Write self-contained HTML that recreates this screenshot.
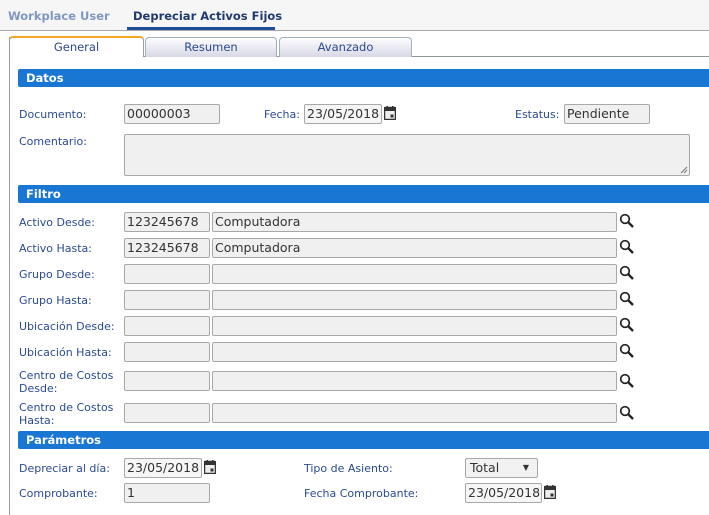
<!DOCTYPE html>
<html><head><meta charset="utf-8"><style>
*{margin:0;padding:0;box-sizing:border-box}
body{width:709px;height:515px;background:#fff;position:relative;overflow:hidden;font-family:"DejaVu Sans","Liberation Sans",sans-serif;font-size:11px}
.a{position:absolute}
.top{left:0;top:0;width:709px;height:31px;background:#f6f6f6;border-bottom:1px solid #a8a8a8}
.tt{font-weight:bold;font-size:11.5px;top:9px}
.tab{top:37px;height:20px;border:1px solid #9fb0bf;border-bottom:none;border-radius:4px 4px 0 0;background:linear-gradient(#fdfdff,#d8d8e6);text-align:center;color:#2c4a8a;font-size:11.5px;line-height:18px}
.bar{left:18px;width:700px;height:18px;background:#1976d2;border-radius:2px;color:#fff;font-weight:bold;font-size:11.5px;line-height:18px;padding-left:8px}
.l{color:#2a4a94;font-size:11px;left:19px;line-height:13px}
.i{height:20px;background:#f0f0f0;border:1px solid #a8a8a8;border-radius:2px;font-size:12.5px;color:#333;line-height:18px;padding-left:2px;white-space:nowrap;overflow:hidden}
</style></head><body>
<svg width="0" height="0" style="position:absolute"><defs>
<g id="c"><rect x="0.5" y="1.5" width="11" height="12" rx="1" fill="#eee" stroke="#333" stroke-width="1.5"/><rect x="0" y="1" width="12" height="4" fill="#333"/><rect x="2.5" y="0" width="1.5" height="2" fill="#333"/><rect x="8" y="0" width="1.5" height="2" fill="#333"/><rect x="6.5" y="8.5" width="3" height="3" fill="#333"/></g>
<g id="m" fill="none" stroke="#222"><circle cx="6" cy="6" r="4.3" stroke-width="1.7"/><path d="M9.2 9.2l4.8 4.8" stroke-width="2.4"/></g>
</defs></svg>
<div class="a top"></div>
<div class="a tt" style="left:8px;color:#7f97c2">Workplace User</div>
<div class="a tt" style="left:133px;color:#1f3a70">Depreciar Activos Fijos</div>
<div class="a" style="left:127px;top:27px;width:148px;height:3px;background:#1f4e99"></div>
<div class="a" style="left:9px;top:56px;width:700px;height:1px;background:#8a9a9a"></div>
<div class="a" style="left:9px;top:37px;width:1px;height:478px;background:#a0a0a0"></div>
<div class="a" style="left:9px;top:36px;width:135px;height:21px;background:#fff;border:1px solid #a0a0a0;border-top:2px solid #f5a623;border-bottom:none;border-radius:4px 4px 0 0;text-align:center;color:#2c4a8a;font-size:11.5px;line-height:18px">General</div>
<div class="a tab" style="left:145px;width:132px">Resumen</div>
<div class="a tab" style="left:279px;width:133px">Avanzado</div>

<div class="a bar" style="top:69px">Datos</div>
<div class="a l" style="top:108px">Documento:</div>
<div class="a i" style="left:124px;top:104px;width:96px">00000003</div>
<div class="a l" style="left:264px;top:108px">Fecha:</div>
<div class="a i" style="left:304px;top:104px;width:78px;background:#f6f6f6">23/05/2018</div>
<svg class="a" style="left:384px;top:106px" width="12" height="14"><use href="#c"/></svg>
<div class="a l" style="left:515px;top:108px">Estatus:</div>
<div class="a i" style="left:564px;top:104px;width:86px">Pendiente</div>
<div class="a l" style="top:135px">Comentario:</div>
<div class="a i" style="left:124px;top:134px;width:566px;height:42px"></div>
<svg class="a" style="left:680px;top:166px" width="8" height="8"><path d="M1 7L7 1M4 7L7 4" stroke="#777" stroke-width="1"/></svg>

<div class="a bar" style="top:185px">Filtro</div>

<div class="a l" style="top:216px">Activo Desde:</div>
<div class="a l" style="top:242px">Activo Hasta:</div>
<div class="a l" style="top:268px">Grupo Desde:</div>
<div class="a l" style="top:294px">Grupo Hasta:</div>
<div class="a l" style="top:320px">Ubicación Desde:</div>
<div class="a l" style="top:346px">Ubicación Hasta:</div>
<div class="a l" style="top:369px">Centro de Costos<br>Desde:</div>
<div class="a l" style="top:401px">Centro de Costos<br>Hasta:</div>

<div class="a i" style="left:124px;top:212px;width:86px">123245678</div><div class="a i" style="left:212px;top:212px;width:405px">Computadora</div>
<div class="a i" style="left:124px;top:238px;width:86px">123245678</div><div class="a i" style="left:212px;top:238px;width:405px">Computadora</div>
<div class="a i" style="left:124px;top:264px;width:86px"></div><div class="a i" style="left:212px;top:264px;width:405px"></div>
<div class="a i" style="left:124px;top:290px;width:86px"></div><div class="a i" style="left:212px;top:290px;width:405px"></div>
<div class="a i" style="left:124px;top:316px;width:86px"></div><div class="a i" style="left:212px;top:316px;width:405px"></div>
<div class="a i" style="left:124px;top:342px;width:86px"></div><div class="a i" style="left:212px;top:342px;width:405px"></div>
<div class="a i" style="left:124px;top:371px;width:86px"></div><div class="a i" style="left:212px;top:371px;width:405px"></div>
<div class="a i" style="left:124px;top:403px;width:86px"></div><div class="a i" style="left:212px;top:403px;width:405px"></div>

<svg class="a" style="left:619px;top:0" width="16" height="430">
<use href="#m" y="213"/><use href="#m" y="239"/><use href="#m" y="265"/><use href="#m" y="291"/><use href="#m" y="317"/><use href="#m" y="343"/><use href="#m" y="373"/><use href="#m" y="405"/>
</svg>

<div class="a bar" style="top:431px">Parámetros</div>
<div class="a l" style="top:462px">Depreciar al día:</div>
<div class="a i" style="left:124px;top:458px;width:78px;background:#f6f6f6">23/05/2018</div>
<svg class="a" style="left:204px;top:460px" width="12" height="14"><use href="#c"/></svg>
<div class="a l" style="left:304px;top:462px">Tipo de Asiento:</div>
<div class="a i" style="left:465px;top:458px;width:73px;background:#f2f2f2;padding-left:4px">Total<span style="position:absolute;right:8px;top:0;font-size:8px">▼</span></div>
<div class="a l" style="top:487px">Comprobante:</div>
<div class="a i" style="left:124px;top:483px;width:86px">1</div>
<div class="a l" style="left:304px;top:487px">Fecha Comprobante:</div>
<div class="a i" style="left:465px;top:483px;width:77px;background:#f6f6f6">23/05/2018</div>
<svg class="a" style="left:544px;top:485px" width="12" height="14"><use href="#c"/></svg>
</body></html>
